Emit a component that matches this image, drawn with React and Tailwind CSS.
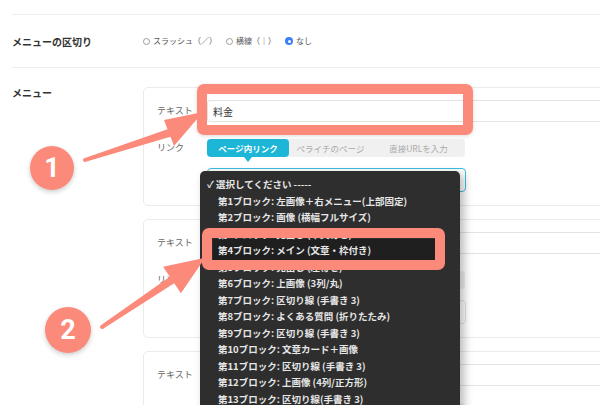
import React from "react";

const RED = "bg-[#fb8a7a]";

const options = [
    "第1ブロック: 左画像＋右メニュー(上部固定)",
    "第2ブロック: 画像 (横幅フルサイズ)",
    "第3ブロック: 見出し (中央寄せ)",
    "第4ブロック: メイン (文章・枠付き)",
    "第5ブロック: 見出し (左寄せ)",
    "第6ブロック: 上画像 (3列/丸)",
    "第7ブロック: 区切り線 (手書き 3)",
    "第8ブロック: よくある質問 (折りたたみ)",
    "第9ブロック: 区切り線 (手書き 3)",
    "第10ブロック: 文章カード＋画像",
    "第11ブロック: 区切り線 (手書き 3)",
    "第12ブロック: 上画像 (4列/正方形)",
    "第13ブロック: 区切り線(手書き 3)",
]

const Radio = ({checked, label}) => (
    <div className="flex items-center gap-[3px]">
        {checked ? (
            <span className="w-[8px] h-[8px] rounded-full bg-[#3b7ff5] flex items-center justify-center">
                <span className="w-[3px] h-[3px] rounded-full bg-white"></span>
            </span>
        ) : (
            <span className="w-[7px] h-[7px] rounded-full border border-[#9a9a9a] bg-white"></span>
        )}
        <span>{label}</span>
    </div>
)

const Card = ({text, focused}) => (
    <div className="h-[119px] shrink-0 border border-[#ebebeb] rounded-[5px] pl-[13px] pt-[12px] bg-white">
        <div className="flex items-center">
            <div className="w-[50px] text-[9px] text-[#666]">テキスト</div>
            <div className="flex-1 h-[22px] border border-[#e3e3e3] rounded-[3px] px-[5px] flex items-center text-[10px] text-[#333]">
                {text}
            </div>
        </div>
        <div className="flex items-start mt-[17px]">
            <div className="w-[50px] text-[9px] text-[#666] leading-[18px]">リンク</div>
            <div className="flex w-[258px] h-[18px] rounded-[4px] bg-[#f0f0f0] text-[8.5px] leading-[18px]">
                <div className="relative w-[82px] rounded-[4px] bg-[#1db6d7] text-white font-bold text-center">
                    ページ内リンク
                    <span className="absolute left-1/2 top-full -ml-[4px] w-0 h-0 border-l-[4px] border-r-[4px] border-t-[5px] border-l-transparent border-r-transparent border-t-[#1db6d7]"></span>
                </div>
                <div className="w-[83px] text-center text-[#aaa]">ペライチのページ</div>
                <div className="flex-1 text-center text-[#aaa]">直接URLを入力</div>
            </div>
        </div>
        <div className={
            focused
                ? "mt-[11px] ml-[50px] w-[259px] h-[24px] rounded-[4px] border-[1.5px] border-[#38c1de]"
                : "mt-[11px] ml-[50px] w-[259px] h-[24px] rounded-[4px] border border-[#e3e3e3]"
        }></div>
    </div>
)

const App = () => {
    return (
        <div className="relative w-[600px] h-[405px] overflow-hidden bg-white font-['Noto_Sans_CJK_JP',sans-serif]">
            <div className="pl-[12px] pt-[14px]">
                <div className="border-t border-[#eeeeee] h-[53px] flex items-center">
                    <div className="w-[131px] text-[10px] font-bold text-[#333]">メニューの区切り</div>
                    <div className="flex items-center gap-[9px] text-[8px] text-[#555]">
                        <Radio label="スラッシュ（／）"/>
                        <Radio label="横線（｜）"/>
                        <Radio checked label="なし"/>
                    </div>
                </div>
                <div className="border-t border-[#eeeeee] flex pt-[19px]">
                    <div className="w-[131px] shrink-0 text-[10px] leading-[12px] font-bold text-[#333]">メニュー</div>
                    <div className="flex flex-col gap-[13px] w-[480px] shrink-0">
                        <Card text="料金" focused/>
                        <Card text=""/>
                        <Card text=""/>
                    </div>
                </div>
            </div>

            {/* red frame around text input */}
            <div className="absolute left-[197px] top-[84px] w-[276px] h-[51px] border-[10px] border-[#fb8a7a] rounded-[7px] shadow-[0_1px_4px_rgba(0,0,0,0.15)]"></div>

            {/* native select dropdown */}
            <div className="absolute left-[200px] top-[171px] w-[260px] h-[240px] bg-[#2e2e2e] rounded-[5px] shadow-[4px_3px_10px_rgba(0,0,0,0.28)] pt-[5px] text-[9.5px] font-bold text-[#e6e6e6] leading-[16.5px] whitespace-nowrap">
                <div className="pl-[7px]">✓ 選択してください -----</div>
                {options.map((o, i) => (
                    i === 3 ? (
                        <div key={o} className="ml-[13px] w-[222px] -my-[3px] py-[3px] pl-[5px] bg-[#1f1f1f]">{o}</div>
                    ) : (
                        <div key={o} className="pl-[18px]">{o}</div>
                    )
                ))}
            </div>

            {/* red frame around option */}
            <div className="absolute left-[202px] top-[228px] w-[243px] h-[42px] border-[10px] border-[#fb8a7a] rounded-[7px]"></div>

            {/* arrows */}
            <svg className="absolute left-0 top-0 pointer-events-none" width="600" height="405" viewBox="0 0 600 405">
                <circle cx="85" cy="160" r="2" fill="#fb8a7a"/>
                <polygon fill="#fb8a7a"
                         points="84.25,158.15 167.5,129.3 164,120 203,112 174,146 170.5,136.7 85.75,161.85"/>
                <circle cx="102" cy="327" r="2" fill="#fb8a7a"/>
                <polygon fill="#fb8a7a"
                         points="100.9,325.3 169.8,276.7 163.1,266.7 205.2,257.8 180.9,293.3 174.2,283.3 103.1,328.7"/>
            </svg>

            <div className={`absolute left-[30px] top-[146px] w-[44px] h-[44px] rounded-full ${RED} text-white font-bold text-[27px] font-['Roboto',sans-serif] flex items-center justify-center shadow-[0_2px_5px_rgba(0,0,0,0.2)]`}>1</div>
            <div className={`absolute left-[45px] top-[307px] w-[46px] h-[46px] rounded-full ${RED} text-white font-bold text-[27px] font-['Roboto',sans-serif] flex items-center justify-center shadow-[0_2px_5px_rgba(0,0,0,0.2)]`}>2</div>
        </div>
    )
}

export default App
